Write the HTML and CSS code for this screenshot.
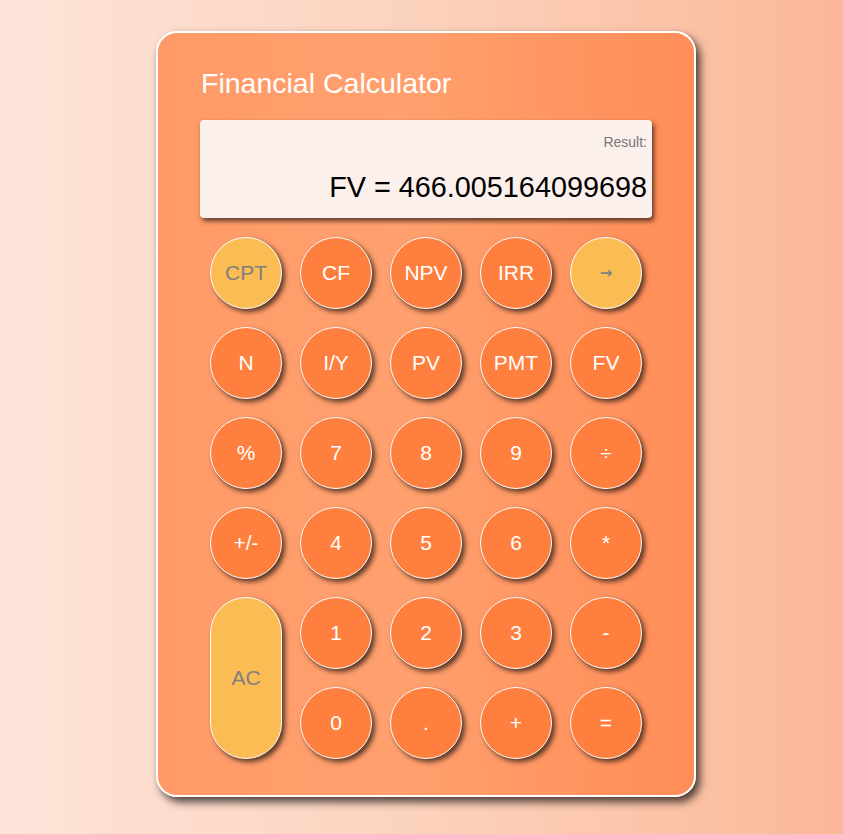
FILE: index.html
```html
<!DOCTYPE html>
<html>
<head>
<meta charset="utf-8">
<link rel="stylesheet" href="styles.css">
</head>
<body>
<div class="calc">
  <h1 class="title">Financial Calculator</h1>
  <div class="display">
    <div class="label">Result:</div>
    <div class="value">FV = 466.005164099698</div>
  </div>
  <div class="keys">
    <button class="key alt">CPT</button>
    <button class="key">CF</button>
    <button class="key">NPV</button>
    <button class="key">IRR</button>
    <button class="key alt arrow">→</button>

    <button class="key">N</button>
    <button class="key">I/Y</button>
    <button class="key">PV</button>
    <button class="key">PMT</button>
    <button class="key">FV</button>

    <button class="key">%</button>
    <button class="key">7</button>
    <button class="key">8</button>
    <button class="key">9</button>
    <button class="key">÷</button>

    <button class="key">+/-</button>
    <button class="key">4</button>
    <button class="key">5</button>
    <button class="key">6</button>
    <button class="key">*</button>

    <button class="key alt tall">AC</button>
    <button class="key">1</button>
    <button class="key">2</button>
    <button class="key">3</button>
    <button class="key">-</button>

    <button class="key">0</button>
    <button class="key">.</button>
    <button class="key">+</button>
    <button class="key">=</button>
  </div>
</div>
</body>
</html>
```
FILE: styles.css
```css
html, body {
  margin: 0;
  padding: 0;
}
body {
  width: 843px;
  height: 834px;
  box-sizing: border-box;
  padding: 31px 0 0 156px;
  background: linear-gradient(to right, #fde4d9 0%, #fcd2bd 50%, #fbb898 100%);
  font-family: "Liberation Sans", Arial, Helvetica, sans-serif;
  overflow: hidden;
}
.calc {
  width: 540px;
  box-sizing: border-box;
  border: 2px solid #ffffff;
  border-radius: 21px;
  padding: 34px 42px 36px 42px;
  background: linear-gradient(to right, #ff9a68 0%, #ffa06e 45%, #ff8d58 100%);
  box-shadow: 4px 5px 8px rgba(0, 0, 0, 0.7);
}
.title {
  margin: 0 0 21px 0;
  font-size: 28.5px;
  line-height: 32px;
  font-weight: normal;
  color: #ffffff;
  padding-left: 1px;
}
.display {
  height: 98px;
  box-sizing: border-box;
  padding: 14px 5px 14px 10px;
  background: #fbf0eb;
  border-radius: 4px;
  box-shadow: 2px 3px 5px rgba(0, 0, 0, 0.65);
  text-align: right;
}
.label {
  font-size: 14px;
  line-height: 16px;
  color: #777777;
}
.value {
  margin-top: 21px;
  font-size: 28.8px;
  line-height: 33px;
  color: #000000;
}
.keys {
  margin-top: 19px;
  display: grid;
  grid-template-columns: repeat(5, 72px);
  grid-auto-rows: 72px;
  gap: 18px;
  justify-content: center;
}
.key {
  width: 72px;
  height: 72px;
  box-sizing: border-box;
  border: 1px solid #ffffff;
  border-radius: 50%;
  background: #ff7f3e;
  color: #ffffff;
  font-family: "Liberation Sans", Arial, Helvetica, sans-serif;
  font-size: 21px;
  padding: 0;
  box-shadow: 3px 3px 5px rgba(0, 0, 0, 0.65);
  display: flex;
  align-items: center;
  justify-content: center;
}
.key.alt {
  background: #fbbc53;
  color: #808080;
}
.key.arrow {
  font-family: "DejaVu Sans", sans-serif;
  font-size: 15px;
  font-weight: bold;
}
.key.tall {
  grid-row: span 2;
  height: 162px;
  border-radius: 36px;
}
```
